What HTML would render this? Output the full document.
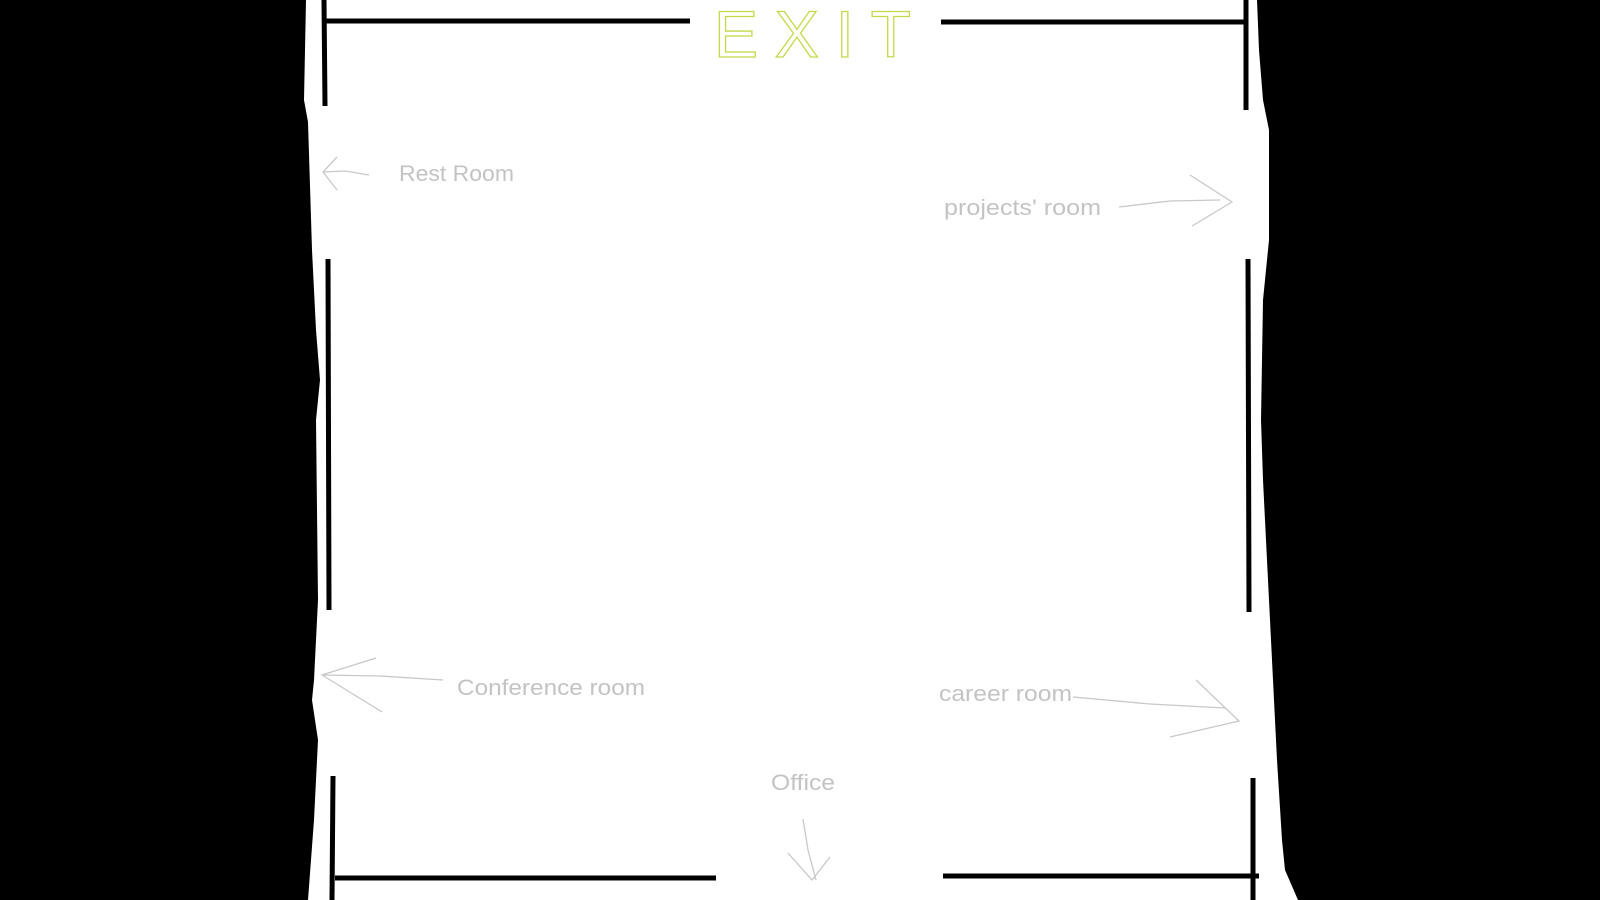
<!DOCTYPE html>
<html><head><meta charset="utf-8"><style>
html,body{margin:0;padding:0;background:#fff;}
svg{display:block;}
text.l{font-family:"Liberation Sans",sans-serif;font-size:22px;fill:#c3c3c3;}
</style></head><body>
<svg width="1600" height="900" viewBox="0 0 1600 900" xmlns="http://www.w3.org/2000/svg">
<rect width="1600" height="900" fill="#fff"/>
<polygon fill="#000" points="0,0 306,0 304,100 308,122 312,250 316,330 320,380 316,420 318,600 314,680 312,700 318,740 314,820 308,900 0,900"/>
<polygon fill="#000" points="1257,0 1600,0 1600,900 1298,900 1285,870 1282,840 1277,760 1269,600 1263,480 1261,420 1263,300 1269,240 1269,130 1263,100 1259,50"/>
<g stroke="#000" stroke-width="5" fill="none">
<line x1="324" y1="21" x2="690" y2="21"/>
<line x1="941" y1="22" x2="1247" y2="22"/>
<line x1="324" y1="0" x2="325" y2="106"/>
<line x1="328" y1="259" x2="329" y2="610"/>
<line x1="333" y1="776" x2="332" y2="900"/>
<line x1="335" y1="878" x2="716" y2="878"/>
<line x1="943" y1="876" x2="1259" y2="876"/>
<line x1="1246" y1="0" x2="1246" y2="110"/>
<line x1="1248" y1="259" x2="1249" y2="612"/>
<line x1="1253" y1="778" x2="1253" y2="900"/>
</g>
<text x="714" y="57" font-family="Liberation Sans,sans-serif" font-size="66" fill="none" stroke="#c6d84a" stroke-width="1.3" textLength="197" lengthAdjust="spacing">EXIT</text>
<g stroke="#c8c8c8" stroke-width="1.3" fill="none">
<polyline points="369,175 345,171 323,172"/>
<polyline points="337,157 323,172 337,190"/>
<polyline points="1119,207 1170,201 1220,200"/>
<polyline points="1190,175 1232,202 1192,226"/>
<polyline points="443,680 380,676 322,675"/>
<polyline points="376,658 322,675 382,712"/>
<polyline points="1073,697 1150,704 1225,708"/>
<polyline points="1196,680 1239,721 1170,737"/>
<polyline points="803,819 808,850 816,880"/>
<polyline points="788,853 812,880 830,857"/>
</g>
<text class="l" x="399" y="181" textLength="115" lengthAdjust="spacingAndGlyphs">Rest Room</text>
<text class="l" x="944" y="215" textLength="157" lengthAdjust="spacingAndGlyphs">projects' room</text>
<text class="l" x="457" y="695" textLength="188" lengthAdjust="spacingAndGlyphs">Conference room</text>
<text class="l" x="939" y="701" textLength="133" lengthAdjust="spacingAndGlyphs">career room</text>
<text class="l" x="771" y="790" textLength="64" lengthAdjust="spacingAndGlyphs">Office</text>
</svg>
</body></html>
